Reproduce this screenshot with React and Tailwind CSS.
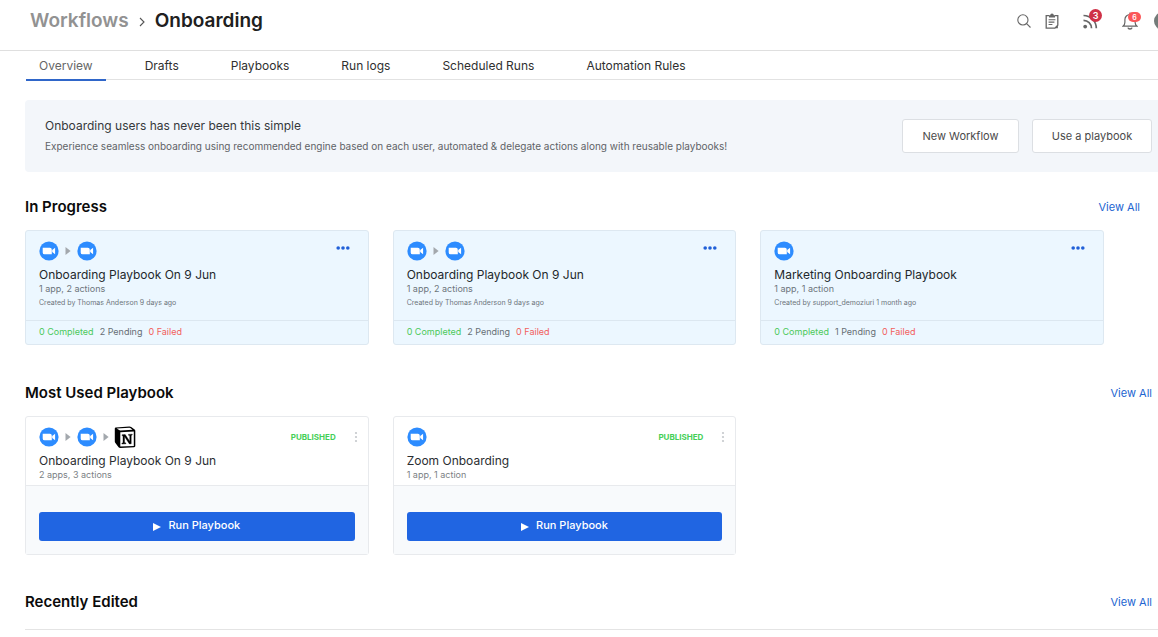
import React from "react";

function ZoomLogo() {
  return (
    <svg viewBox="0 0 20 20" className="size-5 shrink-0" aria-hidden="true">
      <circle cx="10" cy="10" r="9.6" fill="#2d8cff" />
      <path
        d="M3.7 6.8h7.2a1.9 1.9 0 0 1 1.9 1.9v4.6H5.6a1.9 1.9 0 0 1-1.9-1.9zM13.2 8.9l2.9-2.1v6.4l-2.9-2.1z"
        fill="#fff"
      />
    </svg>
  );
}

function NotionLogo() {
  return (
    <svg viewBox="0 0 22 22" className="-ml-px h-[22px] w-[22px] shrink-0" aria-hidden="true">
      <path d="M.8 2.4Q.8 1.6 1.8 1.5L15.4.6q1 0 1.8.5l3.4 2.5q.7.5.7 1.4v15q0 1.1-1.1 1.2l-14 .7q-1 0-1.6-.7l-3.2-4.1q-.6-.8-.6-1.6z" fill="#000" />
      <path d="M2.7 2.6 15.3 1.8q.6 0 1 .3l2.2 1.6-12.2.8q-.7 0-1.2-.4z" fill="#fff" />
      <path d="M6.3 6.3 19.8 5.5v14.4L6.3 20.6z" fill="#fff" />
      <path
        d="M8 8.8l3.2-.2 4.6 6.8V9.5l-1.3-.3v-.8l3.7-.2v.8l-1 .5v8.3l-1.8.1-4.9-7.3v6l1.4.4v.8l-4 .2v-.8l1.1-.5V9.8L8 9.6z"
        fill="#000"
        stroke="#000"
        strokeWidth=".4"
      />
    </svg>
  );
}

function AppChain({ apps }) {
  return (
    <div className="flex h-[22px] items-center gap-[6px]">
      {apps.map((app, i) => (
        <React.Fragment key={i}>
          {i > 0 && (
            <svg viewBox="0 0 6 8" className="h-2 w-[6px]" aria-hidden="true">
              <path d="M.5 0 5.6 4 .5 8z" fill="#a3a8ad" />
            </svg>
          )}
          {app === "zoom" ? <ZoomLogo /> : <NotionLogo />}
        </React.Fragment>
      ))}
    </div>
  );
}

function SectionHeading({ title, inset }) {
  return (
    <div className={inset ? "flex h-6 items-center justify-between pr-[18px]" : "flex h-6 items-center justify-between pr-[6px]"}>
      <h2 className="text-[15px] font-semibold text-[#0b0b0b]">{title}</h2>
      <a href="#" className="text-[11px] text-[#2264d1]">
        View All
      </a>
    </div>
  );
}

function ProgressCard({ apps, title, meta, created, pending }) {
  return (
    <article className="rounded-[3px] border border-[#dde8f1] bg-[#ecf7ff]">
      <div className="relative h-[89px] px-[13px] pt-[9px]">
        <AppChain apps={apps} />
        <button type="button" aria-label="More options" className="absolute top-[14px] right-[18px] flex">
          <svg viewBox="0 0 14 6" className="h-[6px] w-[14px]" fill="#2160d8" aria-hidden="true">
            <circle cx="2.2" cy="3" r="1.8" />
            <circle cx="7" cy="3" r="1.8" />
            <circle cx="11.8" cy="3" r="1.8" />
          </svg>
        </button>
        <h3 className="mt-[5px] text-[12px] leading-4 text-[#23282c]">{title}</h3>
        <p className="text-[9px] leading-[11px] text-[#6d757c]">{meta}</p>
        <p className="mt-[3px] text-[7px] leading-[11px] text-[#6d757c]">{created}</p>
      </div>
      <div className="flex h-6 items-center gap-[6px] border-t border-[#dce7f0] px-[13px] pb-[2px] text-[9px]">
        <span className="text-[#4bc95a]">0 Completed</span>
        <span className="text-[#666e75]">{pending} Pending</span>
        <span className="text-[#f2605c]">0 Failed</span>
      </div>
    </article>
  );
}

function PlaybookCard({ apps, title, meta }) {
  return (
    <article className="rounded-[3px] border border-[#e8eaed] bg-white">
      <div className="relative h-[68px] px-[13px] pt-[9px]">
        <AppChain apps={apps} />
        <div className="absolute top-[13px] right-[9px] flex items-center gap-[17px]">
          <span className="text-[8px] leading-[14px] font-bold text-[#45cf57]">PUBLISHED</span>
          <button type="button" aria-label="Playbook menu">
            <svg viewBox="0 0 6 12" className="h-3 w-[6px]" fill="#c5c8cc" aria-hidden="true">
              <circle cx="3" cy="2" r="1.1" />
              <circle cx="3" cy="6" r="1.1" />
              <circle cx="3" cy="10" r="1.1" />
            </svg>
          </button>
        </div>
        <h3 className="mt-[5px] text-[12px] leading-4 text-[#2b2e31]">{title}</h3>
        <p className="text-[9px] leading-[11px] text-[#7b7f84]">{meta}</p>
      </div>
      <div className="border-t border-[#e8eaed] bg-[#f8fafc] px-[13px] pt-[26px] pb-[13px]">
        <button
          type="button"
          className="flex h-[29px] w-full items-center justify-center gap-[7px] rounded-[3px] bg-[#2065e2] pb-[2px] text-[11px] font-medium text-white"
        >
          <svg viewBox="0 0 8 8" className="mt-[3px] size-2" fill="#fff" aria-hidden="true">
            <path d="M0 0 8 4 0 8z" />
          </svg>
          Run Playbook
        </button>
      </div>
    </article>
  );
}

const tabs = ["Overview", "Drafts", "Playbooks", "Run logs", "Scheduled Runs", "Automation Rules"];

function Header() {
  return (
    <header className="flex h-[51px] items-center justify-between overflow-hidden border-b border-[#dfdfdf] pb-2 pl-[30px]">
      <nav aria-label="Breadcrumb" className="flex items-center gap-[10px] text-[19px] font-semibold">
        <a href="#" className="text-[#929292]">
          Workflows
        </a>
        <svg viewBox="0 0 6 10" className="mt-[2px] h-[10px] w-[6px]" fill="none" stroke="#555" strokeWidth="1.1" aria-hidden="true">
          <path d="m1 1 4 4-4 4" />
        </svg>
        <h1 className="text-[#202020]">Onboarding</h1>
      </nav>
      <div className="-mr-[14px] flex shrink-0 items-center text-[#666]">
        <button type="button" aria-label="Search" className="mr-[14px]">
          <svg viewBox="0 0 14 14" className="size-[14px]" fill="none" stroke="currentColor" strokeWidth="1.1" aria-hidden="true">
            <circle cx="5.9" cy="5.9" r="5.1" />
            <path d="m9.6 9.6 3.9 3.9" />
          </svg>
        </button>
        <button type="button" aria-label="Tasks" className="mr-[24px]">
          <svg viewBox="0 0 14 16" className="h-4 w-[14px]" fill="none" stroke="currentColor" aria-hidden="true">
            <path d="M4 2.7H1.2v12.4h8.6l3-2.9V2.7H10" strokeWidth="1.3" />
            <path d="M12.9 12v3.2H9.5z" fill="currentColor" stroke="none" />
            <path d="M4 2.2h1.2a1.8 1.8 0 0 1 3.6 0H10v2.3H4z" fill="currentColor" stroke="none" />
            <path d="M3.6 6.7h6.8M3.6 9.1h5.8M3.6 11.5h3.8" strokeWidth="1.1" />
          </svg>
        </button>
        <button type="button" aria-label="Feed, 3 new" className="relative mr-[24px]">
          <svg viewBox="0 0 15 15" className="size-[15px]" fill="none" stroke="currentColor" strokeWidth="1.7" aria-hidden="true">
            <circle cx="2.2" cy="12.6" r="1.9" fill="currentColor" stroke="none" />
            <path d="M.5 6.3a8 8 0 0 1 8 8M.5 1.5a12.8 12.8 0 0 1 12.8 12.8" />
          </svg>
          <span className="absolute -top-[5px] left-[6px] flex size-[13px] items-center justify-center rounded-full bg-[#cf3147] text-[9px] leading-none font-semibold text-white">
            3
          </span>
        </button>
        <button type="button" aria-label="Notifications, 6 new" className="relative mr-4">
          <svg viewBox="0 0 16 18" className="h-[18px] w-4" fill="none" stroke="currentColor" strokeWidth="1.2" aria-hidden="true">
            <path d="M8 .5v1.7M1 14.2h14c-1.3-1.1-1.9-2.2-1.9-4V7.6a5.1 5.1 0 0 0-10.2 0v2.6c0 1.8-.6 2.9-1.9 4z" />
            <path d="M6 15.6c.4 1.8 3.6 1.8 4 0" strokeWidth="1.5" />
          </svg>
          <span className="absolute top-0 left-[6px] flex h-[10px] w-[13px] items-center justify-center rounded-full bg-[#fb5658] text-[7px] leading-none font-semibold text-white">
            6
          </span>
        </button>
        <button type="button" aria-label="Account" className="size-[18px] rounded-full bg-[#737b79]" />
      </div>
    </header>
  );
}

export default function App() {
  return (
    <div className="min-h-screen overflow-x-hidden bg-white font-['Inter','Liberation_Sans',sans-serif]">
      <Header />
      <div className="pl-[26px]">
        <nav aria-label="Sections" className="flex h-[29px] gap-[26px] border-b border-[#e2e2e2] text-[12px]">
          {tabs.map((tab, i) => (
            <a
              key={tab}
              href="#"
              aria-current={i === 0 ? "page" : undefined}
              className={
                i === 0
                  ? "flex h-[30px] items-center border-b-2 border-[#2f66c9] px-[13px] pt-[2px] text-[#666]"
                  : "flex h-[30px] items-center border-b-2 border-transparent px-[13px] pt-[2px] text-[#2f2f2f]"
              }
            >
              {tab}
            </a>
          ))}
        </nav>
      </div>
      <main className="pt-5 pl-[25px]">
        <section className="flex h-[72px] items-center justify-between rounded-l-[4px] bg-[#f3f6fa] pr-[6px] pl-5">
          <div>
            <h2 className="text-[12px] leading-5 text-[#35383b]">Onboarding users has never been this simple</h2>
            <p className="text-[10px] leading-5 text-[#5f6367]">
              Experience seamless onboarding using recommended engine based on each user, automated &amp; delegate actions along with reusable playbooks!
            </p>
          </div>
          <div className="flex gap-[13px] text-[11px] text-[#4a4a4a]">
            <button type="button" className="h-[34px] w-[117px] rounded-[3px] border border-[#dcdfe3] bg-white">
              New Workflow
            </button>
            <button type="button" className="h-[34px] w-[120px] rounded-[3px] border border-[#dcdfe3] bg-white">
              Use a playbook
            </button>
          </div>
        </section>

        <section className="mt-[23px]">
          <SectionHeading title="In Progress" inset />
          <div className="mt-[11px] grid grid-cols-3 gap-6 pr-[54px]">
            <ProgressCard
              apps={["zoom", "zoom"]}
              title="Onboarding Playbook On 9 Jun"
              meta="1 app, 2 actions"
              created="Created by Thomas Anderson 9 days ago"
              pending={2}
            />
            <ProgressCard
              apps={["zoom", "zoom"]}
              title="Onboarding Playbook On 9 Jun"
              meta="1 app, 2 actions"
              created="Created by Thomas Anderson 9 days ago"
              pending={2}
            />
            <ProgressCard
              apps={["zoom"]}
              title="Marketing Onboarding Playbook"
              meta="1 app, 1 action"
              created="Created by support_demoziuri 1 month ago"
              pending={1}
            />
          </div>
        </section>

        <section className="mt-9">
          <SectionHeading title="Most Used Playbook" />
          <div className="mt-[11px] grid grid-cols-3 gap-6 pr-[54px]">
            <PlaybookCard apps={["zoom", "zoom", "notion"]} title="Onboarding Playbook On 9 Jun" meta="2 apps, 3 actions" />
            <PlaybookCard apps={["zoom"]} title="Zoom Onboarding" meta="1 app, 1 action" />
          </div>
        </section>

        <section className="mt-[35px]">
          <SectionHeading title="Recently Edited" />
          <hr className="mt-[15px] border-[#e4e4e4]" />
        </section>
      </main>
    </div>
  );
}
